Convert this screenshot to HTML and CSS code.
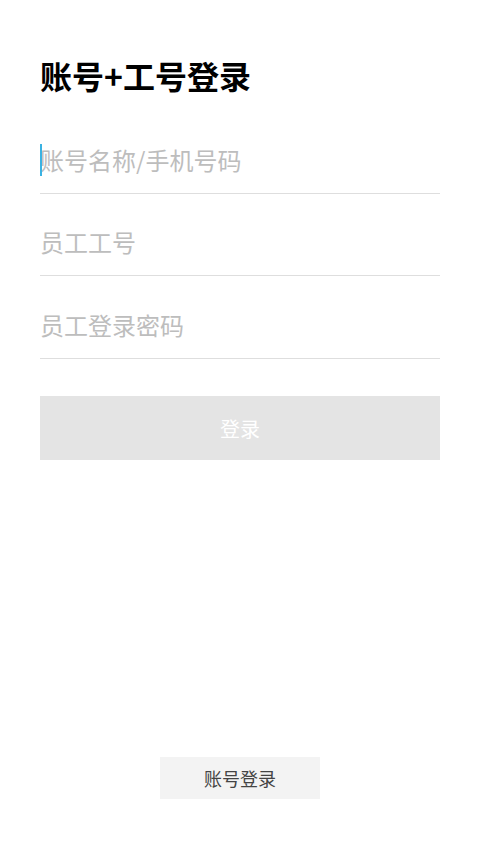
FILE: index.html
```html
<!DOCTYPE html>
<html lang="zh-CN">
<head>
<meta charset="utf-8">
<title>账号+工号登录</title>
<link rel="stylesheet" href="styles.css">
</head>
<body>
<div class="page">
  <h1 class="title">账号+工号登录</h1>
  <form class="form">
    <div class="field">
      <span class="caret"></span>
      <input class="input" type="text" placeholder="账号名称/手机号码">
    </div>
    <div class="field">
      <input class="input" type="text" placeholder="员工工号">
    </div>
    <div class="field field-last">
      <input class="input" type="password" placeholder="员工登录密码">
    </div>
    <button type="button" class="submit">登录</button>
  </form>
  <button type="button" class="switch">账号登录</button>
</div>
</body>
</html>
```

FILE: styles.css
```css
* { box-sizing: border-box; }
html, body { margin: 0; padding: 0; background: #fff; }
body {
  font-family: "Noto Sans CJK SC", "Noto Sans", sans-serif;
}
.page {
  height: 853px;
  display: flex;
  flex-direction: column;
  padding: 55px 40px 54px;
}
.title {
  margin: 0 0 17px;
  font-size: 32px;
  line-height: 40px;
  font-weight: 700;
  color: #000;
}
.form {
  display: flex;
  flex-direction: column;
}
.field {
  position: relative;
  height: 82px;
  border-bottom: 1px solid #dedede;
  display: flex;
  align-items: flex-end;
  padding-bottom: 19px;
}
.field-last { height: 83px; }
.input {
  border: none;
  outline: none;
  padding: 0;
  margin: 0;
  width: 100%;
  height: 28px;
  font-family: inherit;
  font-size: 24px;
  line-height: 28px;
  color: #333;
  background: transparent;
}
.input::placeholder { color: #bdbdbd; }
.caret {
  position: absolute;
  left: 0;
  bottom: 17px;
  width: 2px;
  height: 32px;
  background: #3ab2e2;
}
.submit {
  margin-top: 37px;
  height: 64px;
  border: none;
  background: #e4e4e4;
  color: #fff;
  font-family: inherit;
  font-size: 20px;
  padding: 0;
}
.switch {
  margin: auto auto 0;
  width: 160px;
  height: 42px;
  border: none;
  background: #f3f3f3;
  color: #444;
  font-family: inherit;
  font-size: 18px;
  padding: 0;
}
```
